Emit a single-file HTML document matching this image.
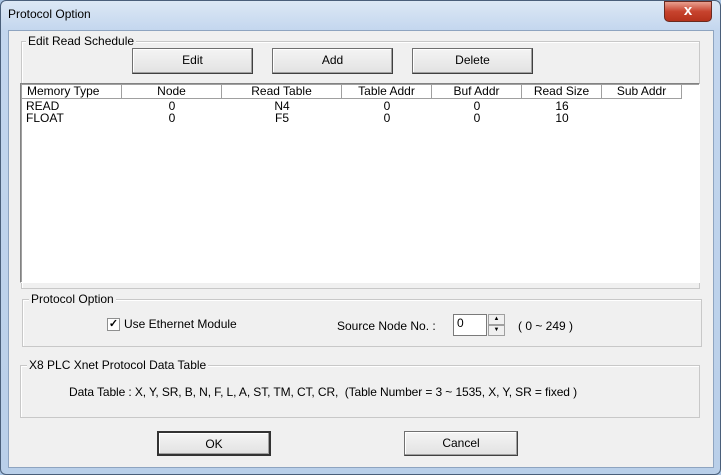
<!DOCTYPE html><html><head><style>
body{margin:0;width:721px;height:475px;background:#a9c4e3;font-family:"Liberation Sans",sans-serif;font-size:12px;position:relative;overflow:hidden}
.a{position:absolute}
.win{left:0;top:0;width:719px;height:473px;border:1px solid #4a5f7a;border-radius:6px;background:linear-gradient(#dce8f5,#c3d6ee 30px,#b9cfe9);}
.body{left:8px;top:30px;width:704px;height:436px;background:#f0f0f0;border:1px solid #8ea4c0}
.grp{border:1px solid #c8c8c8;box-shadow:inset 1px 1px #fff}
.lbl{background:#f0f0f0;padding:0 2px;line-height:12px}
.btn{background:linear-gradient(#f4f4f4,#e2e2e2);border:1px solid #707070;border-right-color:#404040;border-bottom-color:#404040;box-shadow:inset -1px -1px #a0a0a0,inset 1px 1px #fff;text-align:center;box-sizing:border-box;line-height:22px}
.hd{top:85px;height:14px;line-height:13px;text-align:center;border-right:1px solid #a0a0a0;border-bottom:1px solid #a0a0a0;background:#fff;box-sizing:border-box}
.c{text-align:center;line-height:12px}
</style></head><body>
<div class="a win"></div>
<div class="a" style="left:8px;top:7px;font-size:12px">Protocol Option</div>
<div class="a" style="left:664px;top:1px;width:46px;height:19px;border-radius:0 0 5px 5px;background:linear-gradient(#e8a090,#c7432e 50%,#b5321c);border:1px solid #6a2a20;color:#fff;font-weight:bold;text-align:center;line-height:18px;font-size:15px">x</div>
<div class="a body"></div>
<div class="a grp" style="left:21px;top:41px;width:677px;height:246px"></div>
<div class="a lbl" style="left:26px;top:35px">Edit Read Schedule</div>
<div class="a btn" style="left:132px;top:48px;width:121px;height:26px">Edit</div>
<div class="a btn" style="left:272px;top:48px;width:121px;height:26px">Add</div>
<div class="a btn" style="left:412px;top:48px;width:121px;height:26px">Delete</div>
<div class="a" style="left:20px;top:83px;width:678px;height:198px;background:#fff;border:1px solid #828282;border-right-color:#fff;border-bottom-color:#fff;box-shadow:inset 1px 1px #a0a0a0"></div>
<div class="a hd" style="left:22px;width:100px;text-align:left;padding-left:5px">Memory Type</div>
<div class="a hd" style="left:122px;width:100px">Node</div>
<div class="a hd" style="left:222px;width:120px">Read Table</div>
<div class="a hd" style="left:342px;width:90px">Table Addr</div>
<div class="a hd" style="left:432px;width:90px">Buf Addr</div>
<div class="a hd" style="left:522px;width:80px">Read Size</div>
<div class="a hd" style="left:602px;width:80px">Sub Addr</div>
<div class="a" style="left:26px;top:100px;line-height:12px">READ<br>FLOAT</div>
<div class="a c" style="left:122px;top:100px;width:100px">0<br>0</div>
<div class="a c" style="left:222px;top:100px;width:120px">N4<br>F5</div>
<div class="a c" style="left:342px;top:100px;width:90px">0<br>0</div>
<div class="a c" style="left:432px;top:100px;width:90px">0<br>0</div>
<div class="a c" style="left:522px;top:100px;width:80px">16<br>10</div>
<div class="a grp" style="left:22px;top:299px;width:678px;height:46px"></div>
<div class="a lbl" style="left:29px;top:293px">Protocol Option</div>
<div class="a" style="left:107px;top:318px;width:11px;height:11px;border:1px solid #8e8f8f;background:#fff;font-size:11px;line-height:11px;text-align:center;font-weight:bold">✓</div>
<div class="a" style="left:124px;top:317px">Use Ethernet Module</div>
<div class="a" style="left:337px;top:319px">Source Node No. :</div>
<div class="a" style="left:453px;top:314px;width:34px;height:22px;background:#fff;border:1px solid #7a7a7a;box-sizing:border-box;padding-left:3px;line-height:16px">0</div>
<div class="a" style="left:488px;top:314px;width:17px;height:11px;border:1px solid #a0a0a0;box-sizing:border-box;background:#f0f0f0;font-size:6px;text-align:center;line-height:9px">▲</div>
<div class="a" style="left:488px;top:325px;width:17px;height:11px;border:1px solid #a0a0a0;box-sizing:border-box;background:#f0f0f0;font-size:6px;text-align:center;line-height:9px">▼</div>
<div class="a" style="left:518px;top:319px">( 0 ~ 249 )</div>
<div class="a grp" style="left:20px;top:365px;width:678px;height:51px"></div>
<div class="a lbl" style="left:27px;top:359px">X8 PLC Xnet Protocol Data Table</div>
<div class="a" style="left:69px;top:385px;letter-spacing:-0.1px">Data Table : X, Y, SR, B, N, F, L, A, ST, TM, CT, CR,&nbsp; (Table Number = 3 ~ 1535, X, Y, SR = fixed )</div>
<div class="a btn" style="left:157px;top:431px;width:114px;height:25px;border:2px solid #333">OK</div>
<div class="a btn" style="left:404px;top:431px;width:114px;height:25px">Cancel</div>
</body></html>
